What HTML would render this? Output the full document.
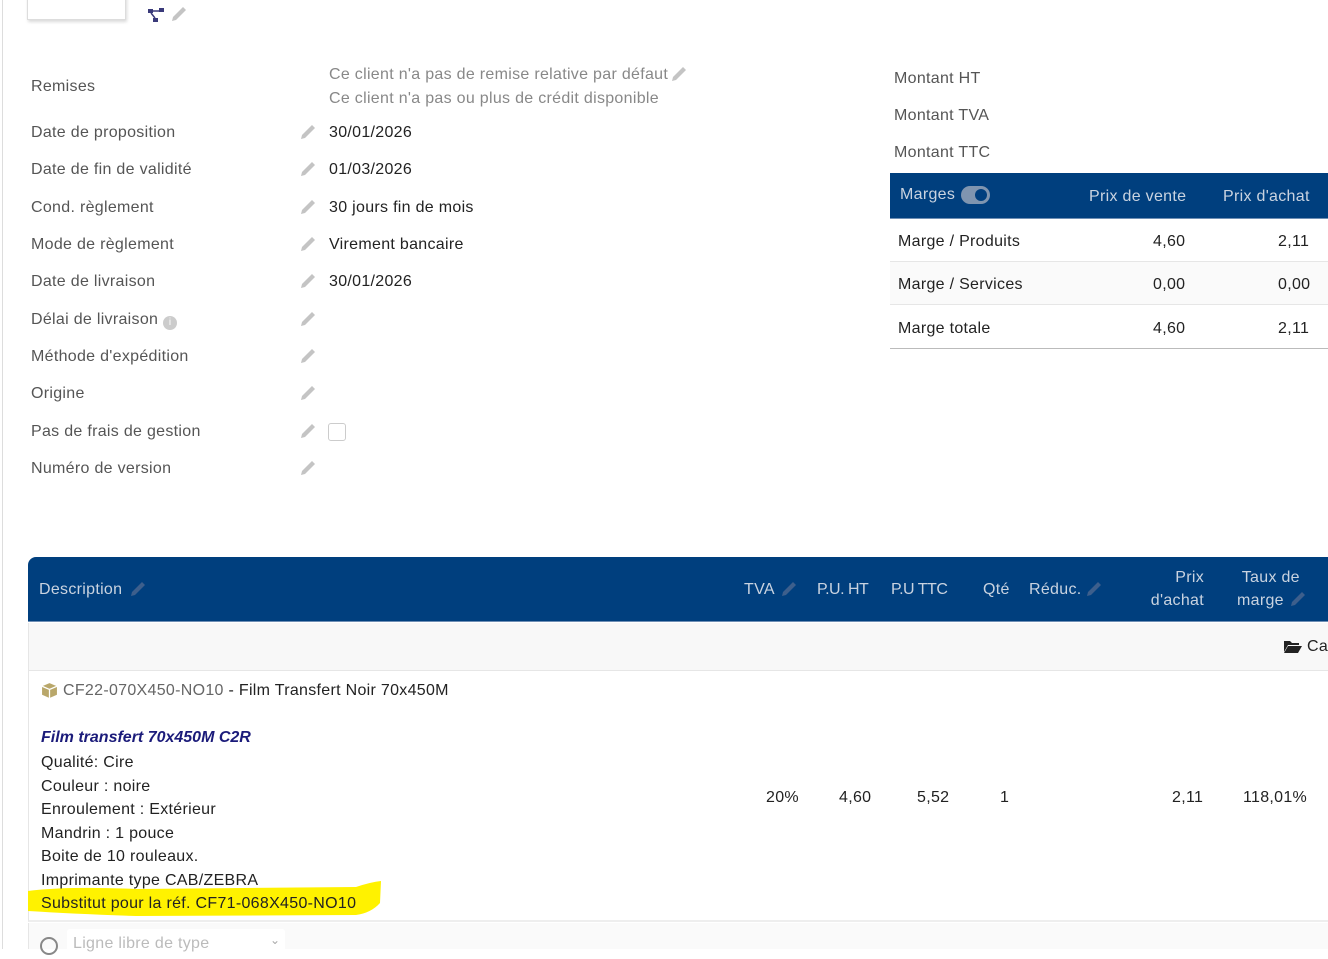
<!DOCTYPE html>
<html><head><meta charset="utf-8"><style>
*{margin:0;padding:0;box-sizing:border-box}
body{width:1328px;height:949px;overflow:hidden;background:#fff;font-family:"Liberation Sans",sans-serif;font-size:16px;letter-spacing:.3px;color:#222;position:relative}
.a{position:absolute;white-space:nowrap}
.lab{color:#555}
.pen{position:absolute;width:18px;height:18px}
.blue{background:#003f7e;color:#c9d3e0}
</style></head><body>
<div class="a" style="left:2px;top:0;width:1px;height:949px;background:#ddd"></div>
<div class="a" style="left:27px;top:-5px;width:99px;height:25px;border:1px solid #ddd;box-shadow:1px 2px 3px rgba(0,0,0,.15);background:#fff"></div>
<svg class="a" style="left:148px;top:8px" width="18" height="16" viewBox="0 0 18 16"><rect x="0" y="1" width="5" height="4" fill="#3a3a7a"/><rect x="11" y="0" width="5" height="4" fill="#3a3a7a"/><rect x="5" y="10" width="5" height="4" fill="#3a3a7a"/><path d="M5 3H11M3 5L7 10" stroke="#3a3a7a" stroke-width="1.5"/></svg>
<svg class="pen" style="left:170px;top:5px" viewBox="0 0 18 18"><path d="M2 16L3 12L13 2L16 5L6 15Z" fill="#c4c4c4"/></svg>

<div class="a lab" style="left:31px;top:78px">Remises</div>
<div class="a" style="left:329px;top:66px;color:#888">Ce client n'a pas de remise relative par défaut</div>
<svg class="pen" style="left:670px;top:65px" viewBox="0 0 18 18"><path d="M2 16L3 12L13 2L16 5L6 15Z" fill="#c4c4c4"/></svg>
<div class="a" style="left:329px;top:90px;color:#888">Ce client n'a pas ou plus de crédit disponible</div>

<div class="a lab" style="left:31px;top:124px">Date de proposition</div><div class="a" style="left:329px;top:124px">30/01/2026</div>
<div class="a lab" style="left:31px;top:161px">Date de fin de validité</div><div class="a" style="left:329px;top:161px">01/03/2026</div>
<div class="a lab" style="left:31px;top:199px">Cond. règlement</div><div class="a" style="left:329px;top:199px">30 jours fin de mois</div>
<div class="a lab" style="left:31px;top:236px">Mode de règlement</div><div class="a" style="left:329px;top:236px">Virement bancaire</div>
<div class="a lab" style="left:31px;top:273px">Date de livraison</div><div class="a" style="left:329px;top:273px">30/01/2026</div>
<div class="a lab" style="left:31px;top:311px">Délai de livraison <span style="display:inline-block;width:14px;height:14px;border-radius:50%;background:#ccc;color:#fff;font-size:10px;text-align:center;line-height:14px;vertical-align:-1px;letter-spacing:0">i</span></div>
<div class="a lab" style="left:31px;top:348px">Méthode d'expédition</div>
<div class="a lab" style="left:31px;top:385px">Origine</div>
<div class="a lab" style="left:31px;top:423px">Pas de frais de gestion</div>
<div class="a" style="left:328px;top:423px;width:18px;height:18px;border:1px solid #ccc;border-radius:3px"></div>
<div class="a lab" style="left:31px;top:460px">Numéro de version</div>

<svg class="pen" style="left:299px;top:123px" viewBox="0 0 18 18"><path d="M2 16L3 12L13 2L16 5L6 15Z" fill="#c4c4c4"/></svg>
<svg class="pen" style="left:299px;top:160px" viewBox="0 0 18 18"><path d="M2 16L3 12L13 2L16 5L6 15Z" fill="#c4c4c4"/></svg>
<svg class="pen" style="left:299px;top:198px" viewBox="0 0 18 18"><path d="M2 16L3 12L13 2L16 5L6 15Z" fill="#c4c4c4"/></svg>
<svg class="pen" style="left:299px;top:235px" viewBox="0 0 18 18"><path d="M2 16L3 12L13 2L16 5L6 15Z" fill="#c4c4c4"/></svg>
<svg class="pen" style="left:299px;top:272px" viewBox="0 0 18 18"><path d="M2 16L3 12L13 2L16 5L6 15Z" fill="#c4c4c4"/></svg>
<svg class="pen" style="left:299px;top:310px" viewBox="0 0 18 18"><path d="M2 16L3 12L13 2L16 5L6 15Z" fill="#c4c4c4"/></svg>
<svg class="pen" style="left:299px;top:347px" viewBox="0 0 18 18"><path d="M2 16L3 12L13 2L16 5L6 15Z" fill="#c4c4c4"/></svg>
<svg class="pen" style="left:299px;top:384px" viewBox="0 0 18 18"><path d="M2 16L3 12L13 2L16 5L6 15Z" fill="#c4c4c4"/></svg>
<svg class="pen" style="left:299px;top:422px" viewBox="0 0 18 18"><path d="M2 16L3 12L13 2L16 5L6 15Z" fill="#c4c4c4"/></svg>
<svg class="pen" style="left:299px;top:459px" viewBox="0 0 18 18"><path d="M2 16L3 12L13 2L16 5L6 15Z" fill="#c4c4c4"/></svg>

<div class="a lab" style="left:894px;top:70px">Montant HT</div>
<div class="a lab" style="left:894px;top:107px">Montant TVA</div>
<div class="a lab" style="left:894px;top:144px">Montant TTC</div>

<div class="a blue" style="left:890px;top:173px;width:438px;height:46px;border-bottom:1px solid #6f8fb5"></div>
<div class="a" style="left:900px;top:186px;color:#c9d3e0">Marges</div>
<div class="a" style="left:961px;top:186px;width:29px;height:18px;border-radius:9px;background:#7f95b0"></div>
<div class="a" style="left:975px;top:189px;width:12px;height:12px;border-radius:50%;background:#003f7e"></div>
<div class="a" style="left:1089px;top:188px;color:#c9d3e0">Prix de vente</div>
<div class="a" style="left:1223px;top:188px;color:#c9d3e0">Prix d'achat</div>
<div class="a" style="left:890px;top:219px;width:438px;height:43px;border-bottom:1px solid #e6e6e6"></div>
<div class="a" style="left:890px;top:262px;width:438px;height:43px;background:#fafafa;border-bottom:1px solid #e6e6e6"></div>
<div class="a" style="left:890px;top:305px;width:438px;height:44px;border-bottom:1px solid #bbb"></div>
<div class="a" style="left:898px;top:233px">Marge / Produits</div><div class="a" style="left:1153px;top:233px">4,60</div><div class="a" style="left:1278px;top:233px">2,11</div>
<div class="a" style="left:898px;top:276px">Marge / Services</div><div class="a" style="left:1153px;top:276px">0,00</div><div class="a" style="left:1278px;top:276px">0,00</div>
<div class="a" style="left:898px;top:320px">Marge totale</div><div class="a" style="left:1153px;top:320px">4,60</div><div class="a" style="left:1278px;top:320px">2,11</div>

<div class="a blue" style="left:28px;top:557px;width:1300px;height:65px;border-top-left-radius:8px;border-bottom:1px solid #6f8fb5"></div>
<div class="a" style="left:39px;top:581px;color:#c9d3e0">Description</div>
<svg class="pen" style="left:129px;top:580px" viewBox="0 0 18 18"><path d="M2 16L3 12L13 2L16 5L6 15Z" fill="#3d5f8c"/></svg>
<div class="a" style="left:744px;top:581px;color:#c9d3e0">TVA</div>
<svg class="pen" style="left:780px;top:580px" viewBox="0 0 18 18"><path d="M2 16L3 12L13 2L16 5L6 15Z" fill="#3d5f8c"/></svg>
<div class="a" style="left:817px;top:581px;color:#c9d3e0;letter-spacing:-.5px">P.U. HT</div>
<div class="a" style="left:891px;top:581px;color:#c9d3e0;letter-spacing:-.5px">P.U TTC</div>
<div class="a" style="left:983px;top:581px;color:#c9d3e0">Qté</div>
<div class="a" style="left:1029px;top:581px;color:#c9d3e0">Réduc.</div>
<svg class="pen" style="left:1085px;top:580px" viewBox="0 0 18 18"><path d="M2 16L3 12L13 2L16 5L6 15Z" fill="#3d5f8c"/></svg>
<div class="a" style="left:1140px;top:566px;width:64px;text-align:right;color:#c9d3e0;line-height:23px">Prix<br>d'achat</div>
<div class="a" style="left:1237px;top:566px;color:#c9d3e0;line-height:23px">&nbsp;Taux de<br>marge</div>
<svg class="pen" style="left:1289px;top:590px" viewBox="0 0 18 18"><path d="M2 16L3 12L13 2L16 5L6 15Z" fill="#3d5f8c"/></svg>

<div class="a" style="left:28px;top:623px;width:1300px;height:48px;background:#f8f8f8;border-bottom:1px solid #e6e6e6;border-left:1px solid #e6e6e6"></div>
<svg class="a" style="left:1284px;top:640px" width="18" height="13" viewBox="0 0 18 13"><path d="M0 1H6L8 3H15V5H4L0 12Z M4 6H18L14 13H0Z" fill="#222"/></svg>
<div class="a" style="left:1307px;top:638px">Ca</div>

<div class="a" style="left:28px;top:671px;width:1300px;height:251px;border-left:1px solid #e6e6e6;border-bottom:2px solid #eee"></div>
<svg class="a" style="left:41px;top:682px" width="17" height="17" viewBox="0 0 16 16"><path d="M8 1L15 4V12L8 15L1 12V4Z" fill="#b9a76a"/><path d="M1 4L8 7L15 4M8 7V15" stroke="#fff" stroke-width="1.2" fill="none"/></svg>
<div class="a" style="left:63px;top:682px"><span style="color:#666">CF22-070X450-NO10</span> - Film Transfert Noir 70x450M</div>
<div class="a" style="left:41px;top:729px;color:#1b1b7a;font-weight:bold;font-style:italic;letter-spacing:0">Film transfert 70x450M C2R</div>
<svg class="a" style="left:26px;top:881px" width="356" height="36" viewBox="0 0 356 36"><path d="M2 10Q40 5 110 8L330 6Q345 1 355 0L354 22Q345 32 330 34L110 35Q50 33 2 30Z" fill="#fff200"/></svg>
<div class="a" style="left:41px;top:751px;line-height:23.5px">Qualité: Cire<br>Couleur : noire<br>Enroulement : Extérieur<br>Mandrin : 1 pouce<br>Boite de 10 rouleaux.<br>Imprimante type CAB/ZEBRA<br>Substitut pour la réf. CF71-068X450-NO10</div>
<div class="a" style="left:766px;top:789px">20%</div>
<div class="a" style="left:839px;top:789px">4,60</div>
<div class="a" style="left:917px;top:789px">5,52</div>
<div class="a" style="left:1000px;top:789px">1</div>
<div class="a" style="left:1172px;top:789px">2,11</div>
<div class="a" style="left:1243px;top:789px">118,01%</div>

<div class="a" style="left:28px;top:923px;width:1300px;height:26px;background:#fafafa;border-left:1px solid #e6e6e6"></div>
<div class="a" style="left:40px;top:937px;width:18px;height:18px;border:2px solid #888;border-radius:50%"></div>
<div class="a" style="left:67px;top:929px;width:218px;height:30px;background:#fff;border-radius:3px"></div>
<div class="a" style="left:73px;top:935px;color:#bbb">Ligne libre de type</div>
<div class="a" style="left:270px;top:933px;color:#aaa;font-size:12px">⌄</div>
</body></html>
